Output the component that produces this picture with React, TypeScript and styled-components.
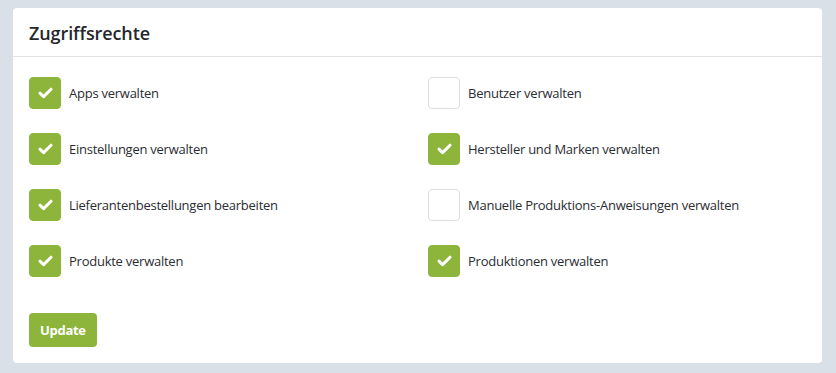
import React, { useState } from 'react';
import styled, { createGlobalStyle } from 'styled-components';

const GlobalStyle = createGlobalStyle`
  html, body {
    margin: 0;
    background-color: #d9e0e8;
  }
  body {
    padding: 8px 14px 11px 13px;
    font-family: 'Open Sans', 'Noto Sans', sans-serif;
    color: #24272c;
  }
`;

const Card = styled.div`
  background-color: #ffffff;
  border-radius: 4px;
  width: 809px;
`;

const CardHeader = styled.div`
  height: 47px;
  display: flex;
  align-items: center;
  padding: 1px 16px 0 16px;
  border-bottom: 1px solid #dfe2e6;

  h2 {
    margin: 0;
    font-size: 18px;
    font-weight: 600;
    letter-spacing: -0.1px;
  }
`;

const CardBody = styled.div`
  padding: 20px 16px 16px 16px;
`;

const PermissionGrid = styled.div`
  display: grid;
  grid-template-columns: 399px 1fr;
  row-gap: 24px;
`;

const PermissionRow = styled.label`
  display: flex;
  align-items: center;
  gap: 8px;
  cursor: pointer;
  user-select: none;
`;

const CheckBox = styled.span<{ $checked: boolean }>`
  width: 32px;
  height: 32px;
  box-sizing: border-box;
  display: flex;
  align-items: center;
  justify-content: center;
  border-radius: 4px;
  background-color: ${({ $checked }) => ($checked ? '#8db53c' : '#ffffff')};
  border: 1px solid ${({ $checked }) => ($checked ? '#8db53c' : '#dadee4')};
`;

const Label = styled.span`
  font-size: 13px;
  font-weight: 500;
  letter-spacing: -0.25px;
  color: #2a2d33;
`;

const UpdateButton = styled.button`
  margin-top: 36px;
  height: 34px;
  padding: 0 11px;
  border: none;
  border-radius: 4px;
  background-color: #8db53c;
  color: #ffffff;
  font-family: 'Open Sans', 'Noto Sans', sans-serif;
  font-size: 13px;
  font-weight: 700;
  letter-spacing: -0.3px;
  cursor: pointer;
`;

const CheckIcon = () => (
  <svg width='15' height='12' viewBox='0 0 15 12'>
    <path
      d='M2 6.2 L5.6 9.6 L13 2.2'
      fill='none'
      stroke='#ffffff'
      strokeWidth='3'
      strokeLinecap='round'
      strokeLinejoin='round'
    />
  </svg>
);

const initialPermissions = [
  { id: 'apps', label: 'Apps verwalten', checked: true },
  { id: 'users', label: 'Benutzer verwalten', checked: false },
  { id: 'settings', label: 'Einstellungen verwalten', checked: true },
  { id: 'brands', label: 'Hersteller und Marken verwalten', checked: true },
  { id: 'orders', label: 'Lieferantenbestellungen bearbeiten', checked: true },
  { id: 'manual', label: 'Manuelle Produktions-Anweisungen verwalten', checked: false },
  { id: 'products', label: 'Produkte verwalten', checked: true },
  { id: 'productions', label: 'Produktionen verwalten', checked: true },
];

const App: React.FC = () => {
  const [permissions, setPermissions] = useState(initialPermissions);

  const toggle = (id: string) => {
    setPermissions((prev) =>
      prev.map((p) => (p.id === id ? { ...p, checked: !p.checked } : p))
    );
  };

  return (
    <>
      <GlobalStyle />
      <Card>
        <CardHeader>
          <h2>Zugriffsrechte</h2>
        </CardHeader>
        <CardBody>
          <PermissionGrid>
            {permissions.map((p) => (
              <PermissionRow key={p.id} onClick={() => toggle(p.id)}>
                <CheckBox $checked={p.checked}>
                  {p.checked && <CheckIcon />}
                </CheckBox>
                <Label>{p.label}</Label>
              </PermissionRow>
            ))}
          </PermissionGrid>
          <UpdateButton>Update</UpdateButton>
        </CardBody>
      </Card>
    </>
  );
};

export default App;
